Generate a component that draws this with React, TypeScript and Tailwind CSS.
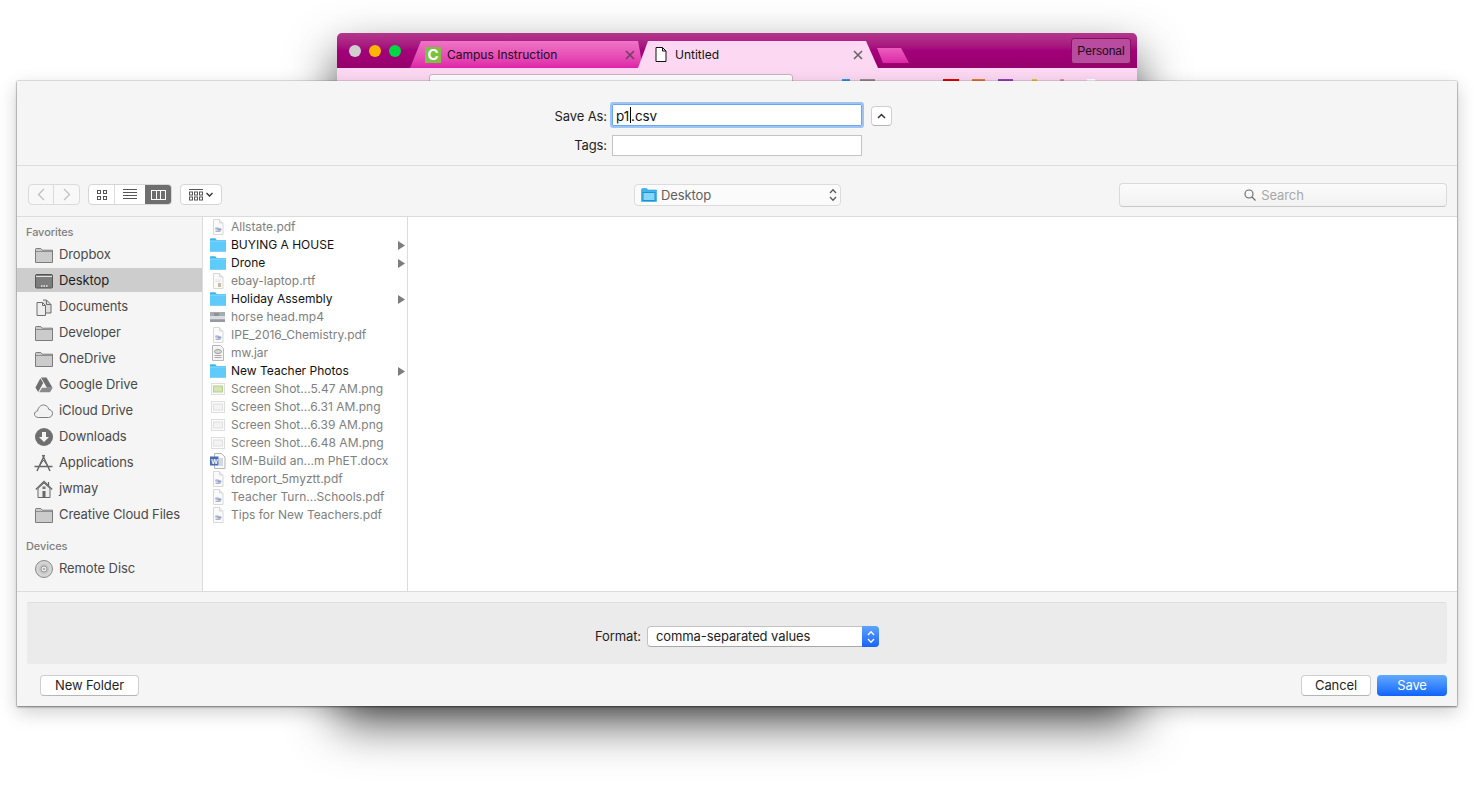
import { ReactNode } from "react";

const FolderGray = () => (
  <svg width="18" height="15" viewBox="0 0 18 15">
    <path d="M.5 14.5V1.200C.5.800.8.500 1.200.500h4.600l1.400 1.700h10.300v12.300z" fill="#cbcbcb" stroke="#7c7c7c" />
    <path d="M1 3.500h16" stroke="#8e8e8e" />
  </svg>
);

const DesktopIcon = () => (
  <svg width="18" height="15" viewBox="0 0 18 15">
    <rect x=".5" y=".5" width="17" height="13.5" rx="1" fill="#7d7d7d" stroke="#555" />
    <path d="M1 2.500h16" stroke="#e2e2e2" />
    <path d="M6 12h1.500M8.500 12H10M11 12h1.500" stroke="#eee" strokeWidth="1.500" />
  </svg>
);

const DocsIcon = () => (
  <svg width="18" height="17" viewBox="0 0 18 17">
    <path d="M8 1h3.500l4.500 4.500v8.500H9" fill="#dedede" stroke="#6f6f6f" />
    <path d="M2 3.500h5.500l3 3v10H2z" fill="#eee" stroke="#6f6f6f" />
    <path d="M7.500 3.500v3h3M11.500 1v4.500H16" fill="none" stroke="#6f6f6f" />
  </svg>
);

const DriveIcon = () => (
  <svg width="18" height="16" viewBox="0 0 18 16">
    <path d="M6 .5h5.500l6 10.300h-5.600z" fill="#6f6f6f" />
    <path d="M5.400 1.200 8.200 6 3.200 15 .4 10.500z" fill="#6f6f6f" />
    <path d="M4.200 15.300 7 10.800h10.700l-2.700 4.500z" fill="#8a8a8a" />
  </svg>
);

const CloudIcon = () => (
  <svg width="19" height="14" viewBox="0 0 19 14">
    <path
      d="M4.500 13.500C2 13.500.5 12 .5 10.200c0-1.800 1.300-3 3-3.200C4 4 6.200 1 9.500 1c2.800 0 4.800 2 5.200 4.300 2 .3 3.800 1.900 3.800 4.100 0 2.300-1.800 4.100-4 4.100z"
      fill="#f2f2f2"
      stroke="#7d7d7d"
    />
  </svg>
);

const DownloadIcon = () => (
  <svg width="18" height="18" viewBox="0 0 18 18">
    <circle cx="9" cy="9" r="9" fill="#6f6f6f" />
    <path d="M7 4h4v5h3l-5 5-5-5h3z" fill="#f5f5f5" />
  </svg>
);

const AppsIcon = () => (
  <svg width="19" height="18" viewBox="0 0 19 18" fill="none" stroke="#666">
    <path d="M10.500 1 3 17M8.500 1l7.500 16M.5 12.500h18" strokeWidth="1.500" />
    <path d="M5 12.500 9.500 6l4.500 6.500" strokeWidth="1" />
  </svg>
);

const HomeIcon = () => (
  <svg width="18" height="18" viewBox="0 0 18 18">
    <path d="M.8 9.500 9 1.500l8.200 8M13.500 2v3.500" fill="none" stroke="#666" strokeWidth="1.300" />
    <path d="M3 8.500v9h12v-9L9 3z" fill="#eee" stroke="#666" />
    <rect x="7.500" y="11" width="3" height="6.500" fill="#666" />
    <rect x="7.500" y="6.500" width="3" height="2.500" fill="#777" />
  </svg>
);

const DiscIcon = () => (
  <svg width="18" height="18" viewBox="0 0 18 18">
    <circle cx="9" cy="9" r="8.500" fill="#d4d4d4" stroke="#8b8b8b" />
    <circle cx="9" cy="9" r="5" fill="#c4c4c4" />
    <circle cx="9" cy="9" r="3" fill="#eaeaea" stroke="#999" />
    <circle cx="9" cy="9" r="1" fill="#999" />
  </svg>
);

const FolderBlue = () => (
  <svg width="16" height="14" viewBox="0 0 16 14">
    <path d="M0 13.500V1c0-.4.3-.7.7-.7h4.600L6.800 2H16v11.500z" fill="#3fb4ec" />
    <rect x="0" y="3" width="16" height="10.500" fill="#5ecbfa" />
    <path d="M0 3h16" stroke="#8cdcfd" />
  </svg>
);

const PageBase = ({ children }: { children?: ReactNode }) => (
  <svg width="14" height="16" viewBox="0 0 14 16">
    <path d="M2.500.5h6l3.500 3.500v11.500H2.500z" fill="#fafafa" stroke="#d8d8d8" />
    <path d="M8.500.5V4H12" fill="#eee" stroke="#d8d8d8" />
    {children}
  </svg>
);

const PdfIcon = () => (
  <PageBase>
    <ellipse cx="6" cy="9.500" rx="2" ry="1.300" fill="#a8b8dc" />
    <ellipse cx="8.500" cy="10.500" rx="2" ry="1.300" fill="#8fa3cf" />
    <rect x="4.500" y="11.500" width="5" height="1.500" fill="#b3b3bd" />
  </PageBase>
);

const RtfIcon = () => (
  <PageBase>
    <rect x="7" y="10" width="3" height="4" fill="#c9b9a0" />
    <path d="M4 7h6M4 8.500h6" stroke="#e8e8e8" />
  </PageBase>
);

const JarIcon = () => (
  <svg width="14" height="16" viewBox="0 0 14 16">
    <path d="M1.500.5h8l3 3v12h-11z" fill="#f4f4f4" stroke="#b8b8b8" />
    <ellipse cx="7" cy="6.500" rx="3.500" ry="2" fill="#d8d8d0" stroke="#a0a0a0" />
    <path d="M3.500 10.500h7M3.500 12.500h7" stroke="#aaa" />
  </svg>
);

const VideoThumb = () => (
  <svg width="15" height="10" viewBox="0 0 15 10">
    <rect width="15" height="10" fill="#a8acb0" />
    <rect y="4" width="15" height="3" fill="#d8dde2" />
    <rect x="4" y="1" width="5" height="3" fill="#8d9298" />
    <rect y="8" width="15" height="2" fill="#969a9e" />
  </svg>
);

const PngThumb = ({ green }: { green?: boolean }) => (
  <svg width="14" height="12" viewBox="0 0 14 12">
    <rect x=".5" y=".5" width="13" height="11" fill="#fbfbfb" stroke="#dedede" />
    <rect x="2.500" y="3" width="9" height="6" fill={green ? "#d4e4b4" : "#f3f3f3"} stroke={green ? "#b8d08a" : "#e0e0e0"} />
  </svg>
);

const DocxIcon = () => (
  <svg width="16" height="16" viewBox="0 0 16 16">
    <path d="M4.500.5h7l3.500 3.500v11.500H4.500z" fill="#fafafa" stroke="#b5b5b5" />
    <path d="M9 6h4M9 8h4M9 10h4M9 12h4" stroke="#aeb6c8" />
    <rect x="0" y="3.500" width="8.500" height="9" fill="#4a6cb3" />
    <text x="1.200" y="10.800" fontSize="7" fontWeight="700" fill="#fff" fontFamily="Liberation Sans, sans-serif">W</text>
  </svg>
);

const UpDown = ({ color = "#5a5a5a" }: { color?: string }) => (
  <svg width="8" height="14" viewBox="0 0 8 14" fill="none" stroke={color} strokeWidth="1.300">
    <path d="M1 5l3-3.200L7 5M1 9l3 3.200L7 9" />
  </svg>
);

const sidebarFavorites: { icon: ReactNode; label: string; active?: boolean }[] = [
  { icon: <FolderGray />, label: "Dropbox" },
  { icon: <DesktopIcon />, label: "Desktop", active: true },
  { icon: <DocsIcon />, label: "Documents" },
  { icon: <FolderGray />, label: "Developer" },
  { icon: <FolderGray />, label: "OneDrive" },
  { icon: <DriveIcon />, label: "Google Drive" },
  { icon: <CloudIcon />, label: "iCloud Drive" },
  { icon: <DownloadIcon />, label: "Downloads" },
  { icon: <AppsIcon />, label: "Applications" },
  { icon: <HomeIcon />, label: "jwmay" },
  { icon: <FolderGray />, label: "Creative Cloud Files" },
];

const files: { icon: ReactNode; name: string; folder?: boolean }[] = [
  { icon: <PdfIcon />, name: "Allstate.pdf" },
  { icon: <FolderBlue />, name: "BUYING A HOUSE", folder: true },
  { icon: <FolderBlue />, name: "Drone", folder: true },
  { icon: <RtfIcon />, name: "ebay-laptop.rtf" },
  { icon: <FolderBlue />, name: "Holiday Assembly", folder: true },
  { icon: <VideoThumb />, name: "horse head.mp4" },
  { icon: <PdfIcon />, name: "IPE_2016_Chemistry.pdf" },
  { icon: <JarIcon />, name: "mw.jar" },
  { icon: <FolderBlue />, name: "New Teacher Photos", folder: true },
  { icon: <PngThumb green />, name: "Screen Shot...5.47 AM.png" },
  { icon: <PngThumb />, name: "Screen Shot...6.31 AM.png" },
  { icon: <PngThumb />, name: "Screen Shot...6.39 AM.png" },
  { icon: <PngThumb />, name: "Screen Shot...6.48 AM.png" },
  { icon: <DocxIcon />, name: "SIM-Build an...m PhET.docx" },
  { icon: <PdfIcon />, name: "tdreport_5myztt.pdf" },
  { icon: <PdfIcon />, name: "Teacher Turn...Schools.pdf" },
  { icon: <PdfIcon />, name: "Tips for New Teachers.pdf" },
];

const SidebarRow = ({ icon, label, active }: { icon: ReactNode; label: string; active?: boolean }) => (
  <div className={`flex h-6 mb-0.5 pt-[2px] items-center ${active ? "bg-[#cdcdcd] text-[#1f1f1f]" : "text-[#4a4a4a]"}`}>
    <div className="w-[19px] ml-[17px] mr-[6px] flex justify-center">{icon}</div>
    <span className="text-[13px]">{label}</span>
  </div>
);

const SidebarHeading = ({ children }: { children: ReactNode }) => (
  <div className="h-3 mb-1 pl-[9px] text-[11px] leading-3 font-medium text-[#7f7f7f]">{children}</div>
);

const BrowserWindow = () => (
  <div className="absolute left-[337px] top-[33px] w-[800px] h-[668px] rounded-t-[5px] flex flex-col bg-[#fcd8f2] shadow-[0_22px_48px_rgba(0,0,0,0.68)]">
    <div className="h-[35px] shrink-0 flex rounded-t-[5px] bg-gradient-to-b from-[#b2378c] via-[#a3007a] to-[#96006c]">
      <div className="w-[73px] flex gap-2 pl-3 pt-3">
        <div className="w-3 h-3 rounded-full bg-[#cfcfcf]" />
        <div className="w-3 h-3 rounded-full bg-[#fcb500]" />
        <div className="w-3 h-3 rounded-full bg-[#00d843]" />
      </div>
      <div className="self-end flex">
        <div className="w-[233px] h-[27px] flex items-center pl-[15px] bg-gradient-to-b from-[#ee74c5] to-[#df22a8] [clip-path:polygon(11px_0,228px_0,233px_27px,0_27px)]">
          <div className="w-4 h-4 shrink-0 bg-[#7cc142] flex items-center justify-center text-white font-bold text-[15px] leading-4">C</div>
          <span className="ml-[6px] text-[12px] text-[#220a1c]">Campus Instruction</span>
          <svg className="ml-auto mr-2" width="10" height="10" viewBox="0 0 10 10" stroke="#6f3f66" strokeWidth="1.600">
            <path d="M1 1l8 8M9 1l-8 8" />
          </svg>
        </div>
        <div className="-ml-[5px] w-[240px] h-[27px] flex items-center pl-[17px] bg-[#fcd8f2] [clip-path:polygon(10px_0,228px_0,240px_27px,0_27px)]">
          <svg width="12" height="15" viewBox="0 0 12 15" fill="#fff" stroke="#111">
            <path d="M1 .5h6.500L11 4v10.500H1zM7.500.5V4H11" />
          </svg>
          <span className="ml-2 text-[12px] text-[#111]">Untitled</span>
          <svg className="ml-auto mr-[15px]" width="10" height="10" viewBox="0 0 10 10" stroke="#666" strokeWidth="1.600">
            <path d="M1 1l8 8M9 1l-8 8" />
          </svg>
        </div>
        <div className="-ml-px mb-[5px] self-end w-[32px] h-[15px] bg-gradient-to-b from-[#ea5cbd] to-[#dd25a8] [clip-path:polygon(0_0,24px_0,32px_15px,6px_15px)]" />
      </div>
      <div className="ml-auto mr-[6px] mt-[5px] w-[60px] h-[26px] rounded-[3px] border border-[#86105f] bg-[#b84c9e] flex items-center justify-center text-[12px] text-[#1c0a18] font-['Liberation_Sans',sans-serif]">
        Personal
      </div>
    </div>
    <div className="flex items-start">
      <div className="ml-[92px] mt-[6px] w-[364px] h-4 rounded-t-[3px] bg-white border border-[#c9b3c2]" />
      <div className="flex mt-[11px]">
        <div className="ml-[49px] w-2 h-[3px] bg-[#2d9be0]" />
        <div className="ml-[10px] w-[15px] h-[3px] bg-[#9c8a97]" />
        <div className="ml-[68px] w-4 h-[3px] bg-[#ee0000]" />
        <div className="ml-[13px] w-[13px] h-[3px] bg-[#e8793a]" />
        <div className="ml-[13px] w-[15px] h-[3px] bg-[#9a3fc0]" />
        <div className="ml-[19px] w-[5px] h-[3px] bg-[#e8c33a]" />
        <div className="ml-[23px] w-1 h-[3px] bg-[#ea8aa8]" />
        <div className="ml-[23px] w-2 h-[3px] bg-white" />
      </div>
    </div>
  </div>
);

const Toolbar = () => (
  <div className="h-[51px] shrink-0 border-b border-[#dcdcdc] pt-[18px] pl-[11px] pr-[10px] grid grid-cols-[1fr_207px_1fr] items-start">
    <div className="flex">
      <div className="flex h-[21px] rounded-[4px] border border-[#dbdbdb] bg-[#f8f8f8] divide-x divide-[#dbdbdb]">
        <div className="w-[25px] flex items-center justify-center">
          <svg width="8" height="13" viewBox="0 0 8 13" fill="none" stroke="#c0c0c0" strokeWidth="1.300">
            <path d="M7 1 1.500 6.500 7 12" />
          </svg>
        </div>
        <div className="w-[25px] flex items-center justify-center">
          <svg width="8" height="13" viewBox="0 0 8 13" fill="none" stroke="#c0c0c0" strokeWidth="1.300">
            <path d="M1 1l5.500 5.500L1 12" />
          </svg>
        </div>
      </div>
      <div className="ml-2 flex h-[21px] w-[84px] rounded-[4px] border border-[#d6d6d6] bg-white overflow-hidden">
        <div className="w-[26px] flex items-center justify-center border-r border-[#dcdcdc]">
          <svg width="10" height="10" viewBox="0 0 10 10" fill="none" stroke="#555">
            <rect x=".5" y=".5" width="3" height="3" />
            <rect x="6.500" y=".5" width="3" height="3" />
            <rect x=".5" y="6.500" width="3" height="3" />
            <rect x="6.500" y="6.500" width="3" height="3" />
          </svg>
        </div>
        <div className="w-[30px] flex items-center justify-center">
          <svg width="14" height="11" viewBox="0 0 14 11" stroke="#555">
            <path d="M0 .5h14M0 3.500h14M0 6.500h14M0 9.500h14" />
          </svg>
        </div>
        <div className="flex-1 flex items-center justify-center bg-[#6e6e6e]">
          <svg width="15" height="10" viewBox="0 0 15 10" fill="none" stroke="#fff">
            <rect x=".5" y=".5" width="14" height="9" />
            <path d="M5.500 0v10M9.500 0v10" />
          </svg>
        </div>
      </div>
      <div className="ml-2 h-[21px] w-[42px] rounded-[4px] border border-[#d6d6d6] bg-white flex items-center justify-center gap-[3px]">
        <svg width="14" height="12" viewBox="0 0 14 12" fill="none" stroke="#555">
          <path d="M0 .5h14" />
          <rect x=".5" y="3" width="3" height="3" />
          <rect x="5.500" y="3" width="3" height="3" />
          <rect x="10.500" y="3" width="3" height="3" />
          <rect x=".5" y="8" width="3" height="3" />
          <rect x="5.500" y="8" width="3" height="3" />
          <rect x="10.500" y="8" width="3" height="3" />
        </svg>
        <svg width="7" height="5" viewBox="0 0 7 5" fill="none" stroke="#333" strokeWidth="1.400">
          <path d="M.5 1 3.500 4l3-3" />
        </svg>
      </div>
    </div>
    <div className="h-[22px] rounded-[4px] border border-[#dcdcdc] bg-[#fbfbfb] flex items-center pl-[6px] pr-[3px]">
      <svg width="16" height="14" viewBox="0 0 16 14">
        <path d="M.5 13.500V1.500c0-.5.4-1 1-1h4l1.200 1.500h8.800v11.500z" fill="#3fb4ec" stroke="#2a9fd8" strokeWidth=".6" />
        <rect x="2" y="4.500" width="12" height="8" fill="#86d6fb" stroke="#1f93cd" />
      </svg>
      <span className="ml-1 pt-[2px] text-[13px] text-[#5f5f5f]">Desktop</span>
      <div className="ml-auto">
        <UpDown />
      </div>
    </div>
    <div className="flex justify-end">
      <div className="-mt-px w-[328px] h-6 rounded-[4px] border border-[#dadada] border-b-[#c8c8c8] bg-gradient-to-b from-[#fbfbfb] to-[#f2f2f2] flex items-center justify-center">
        <svg width="12" height="12" viewBox="0 0 12 12" fill="none" stroke="#666" strokeWidth="1.100">
          <circle cx="5" cy="5" r="4" />
          <path d="M8 8l3.500 3.500" />
        </svg>
        <span className="ml-[5px] mr-[18px] pt-[2px] text-[13px] text-[#a8a8a8]">Search</span>
      </div>
    </div>
  </div>
);

const SaveDialog = () => (
  <div className="absolute left-[17px] top-[81px] w-[1440px] h-[625px] flex flex-col bg-[#f5f5f5] text-[13px] tracking-[-0.1px] shadow-[0_1px_2px_rgba(0,0,0,0.45),0_0_1px_rgba(0,0,0,0.5),0_6px_18px_rgba(0,0,0,0.2)]">
    <div className="h-[85px] shrink-0 border-b border-[#dcdcdc] pt-[23px] grid grid-cols-[1fr_250px_1fr] grid-rows-[22px_21px] gap-y-[9px] text-[#1f1f1f]">
      <div className="flex items-center justify-end pr-[5px] pt-[3px]">Save As:</div>
      <div className="h-[22px] bg-white border border-[#6ba6ec] outline-2 outline-[#9cc4f4] rounded-[1px] flex items-center pl-[3px] pt-[2px] text-[#111] text-[13.5px]">
        <span>p1</span>
        <span className="h-4 ml-px -mt-[2px] border-l border-black" />
        <span>.csv</span>
      </div>
      <div className="pl-[9px] pt-[2px] flex items-center">
        <div className="w-[21px] h-5 rounded-[4px] border border-[#d0d0d0] border-b-[#b5b5b5] bg-white flex items-center justify-center">
          <svg width="9" height="6" viewBox="0 0 9 6" fill="none" stroke="#333" strokeWidth="1.500">
            <path d="M1 5l3.500-3.500L8 5" />
          </svg>
        </div>
      </div>
      <div className="flex items-center justify-end pr-[5px]">Tags:</div>
      <div className="bg-white border border-[#c4c4c4]" />
    </div>

    <Toolbar />

    <div className="h-[375px] shrink-0 flex border-b border-[#dcdcdc]">
      <div className="w-[186px] shrink-0 border-r border-[#dcdcdc] pt-[9px]">
        <SidebarHeading>Favorites</SidebarHeading>
        {sidebarFavorites.map((item) => (
          <SidebarRow key={item.label} icon={item.icon} label={item.label} active={item.active} />
        ))}
        <div className="h-3" />
        <SidebarHeading>Devices</SidebarHeading>
        <SidebarRow icon={<DiscIcon />} label="Remote Disc" />
      </div>
      <div className="w-[205px] shrink-0 border-r border-[#dcdcdc] bg-white pt-px tracking-normal">
        {files.map((file) => (
          <div key={file.name} className="h-[18px] flex items-center">
            <div className="ml-[6px] w-[17px] flex justify-center">{file.icon}</div>
            <span className={`ml-[5px] text-[12px] ${file.folder ? "text-[#111]" : "text-[#808080]"}`}>{file.name}</span>
            {file.folder && (
              <svg className="ml-auto mr-[2px]" width="7" height="9" viewBox="0 0 7 9" fill="#7d7d7d">
                <path d="M0 0l7 4.500L0 9z" />
              </svg>
            )}
          </div>
        ))}
      </div>
      <div className="flex-1 bg-white" />
    </div>

    <div className="flex-1 px-[10px] pt-[10px]">
      <div className="h-[62px] rounded-[2px] bg-[#ebebeb] border-t border-[#dedede] pt-[6px] flex items-center justify-center">
        <span className="mr-[6px] text-[#1f1f1f]">Format:</span>
        <div className="w-[232px] h-[21px] rounded-[4px] bg-white border border-[#c2c2c2] border-b-[#a8a8a8] flex items-center">
          <span className="ml-2 text-[#222]">comma-separated values</span>
          <div className="ml-auto h-[21px] w-[17px] -mr-px rounded-r-[4px] bg-gradient-to-b from-[#5ea2fb] to-[#1a62f5] flex items-center justify-center">
            <UpDown color="#fff" />
          </div>
        </div>
      </div>
      <div className="mt-[11px] flex pl-[13px]">
        <div className="w-[99px] h-[21px] rounded-[4px] border border-[#cfcfcf] border-b-[#b5b5b5] bg-white flex items-center justify-center text-[#1f1f1f]">
          New Folder
        </div>
        <div className="ml-auto w-[70px] h-[21px] rounded-[4px] border border-[#cfcfcf] border-b-[#b5b5b5] bg-white flex items-center justify-center text-[#1f1f1f]">
          Cancel
        </div>
        <div className="ml-[6px] w-[70px] h-[21px] rounded-[4px] bg-gradient-to-b from-[#62a9ff] to-[#0f62fe] flex items-center justify-center text-white">
          Save
        </div>
      </div>
    </div>
  </div>
);

export default function App() {
  return (
    <div className="relative w-[1474px] h-[786px] overflow-hidden bg-white font-['Inter',sans-serif]">
      <BrowserWindow />
      <SaveDialog />
    </div>
  );
}
